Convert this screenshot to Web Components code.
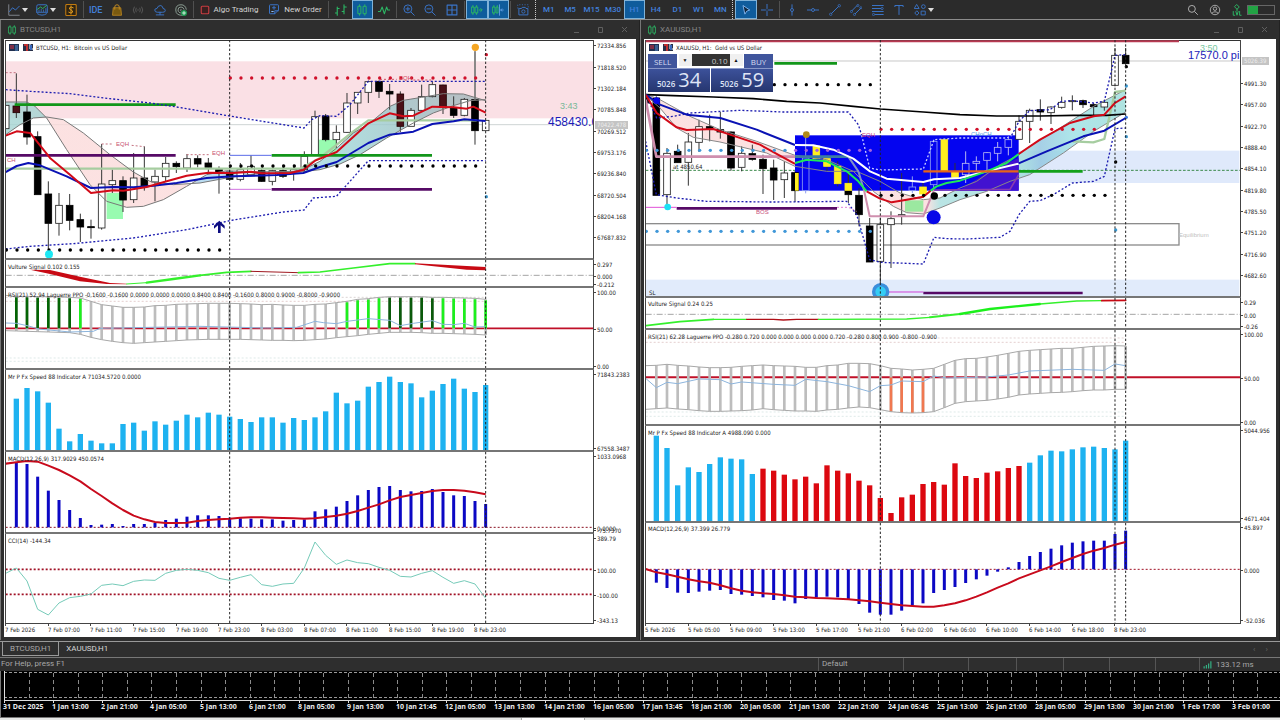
<!DOCTYPE html>
<html lang="en">
<head>
<meta charset="utf-8">
<title>Trading terminal</title>
<style>
html,body{margin:0;background:#2e2e2e}
body{font-family:Roboto,"Open Sans",sans-serif;color:#c8c8c8;font-size:8px}
</style>
</head>
<body>
<trade-terminal></trade-terminal>
<script>
/* ---------- shared base ---------- */
class Base extends HTMLElement {
  draw(html) {
    if (!this.shadowRoot) this.attachShadow({ mode: 'open' });
    const t = document.createElement('template');
    t.innerHTML = html;
    this.shadowRoot.replaceChildren(t.content.cloneNode(true));
  }
}

/* ---------- icons, 16 x 16 grid ---------- */
const B = '#3a74c8', G = '#2cb564';
const sv = (c, d, w = 1.3) => `<path d="${d}" fill="none" stroke="${c}" stroke-width="${w}" stroke-linecap="round" stroke-linejoin="round"/>`;
const ICONS = {
  chart: sv('#80858c', 'M1 1V15H15') + sv(B, 'M2 10L6 5L10 8L15 3'),
  indicator: sv(B, 'M1 8V3Q1 1 3 1H13Q15 1 15 3V8M1 11H15M2 13Q8 17 14 13M1 11V8M15 11V8') + sv(G, 'M2 7L6 4L9 6L14 2') + sv(B, 'M4 10V8M7 10V7M10 10V8M13 10V6', 1),
  dollar: '<rect x="1" y="0.500" width="14" height="15" rx="1.500" fill="#2f2412" stroke="#c07a10" stroke-width="1.400"/>' + sv('#e09a20', 'M11 5Q8 3 6 5Q5 7 8 8Q11 9 10 11Q8 13 5 11M8 2.500V13.500'),
  bag: '<path d="M3 5H13L14 15H2Z" fill="#7a5a10" stroke="#b88420" stroke-width="1.200"/>' + sv('#c08a24', 'M5 7V4Q5 1 8 1Q11 1 11 4V7'),
  signal: sv('#606060', 'M3 4Q0 8 3 12M5.500 5.500Q4 8 5.500 10.500M13 4Q16 8 13 12M10.500 5.500Q12 8 10.500 10.500M8 7.500V8.500', 1.1),
  cloud: sv(B, 'M4 11Q1 11 1 8Q1 6 4 6Q5 2 9 2Q12 3 12 6Q15 6 15 9Q15 11 12 11ZM8 11V14M3 14.500H13'),
  vps: sv('#9ab0a4', 'M11 15Q1 16 1 8Q1 1 8 1Q14 1 15 7M9 12Q4 12 4 8Q4 4 8 4Q11 4 12 7M8 9.500Q6.500 8 8 7', 1.1) + '<circle cx="12" cy="12" r="4" fill="#1d9a50"/>' + sv('#fff', 'M12 10V14M10 12H14', 1),
  stop: '<rect x="2" y="2" width="12" height="12" rx="1.500" fill="#3a2020" stroke="#c83c40" stroke-width="1.800"/>',
  order: sv(B, 'M9 13H3Q2 13 2 12V2Q2 1 3 1H13Q14 1 14 2V8L9 13V9H14M6 5H10M8 3V7') + sv('#8fc0ff', 'M5 10H7'),
  bars: sv(G, 'M3 4V15M3 12H0.500M3 6H5.500M12 1V13M12 10H9.500M12 4H15', 1.5),
  candles: sv(G, 'M3 3H6.500V13H3ZM4.750 1V3M4.750 13V15M10 3H13.500V13H10ZM11.750 1V3M11.750 13V15', 1.3),
  line: sv(G, 'M0.500 10L3 10L5.500 4L8.500 13L11.500 4L13 8H15.500', 1.4),
  zoomin: sv(B, 'M11 11L15 15M4 6.500H9M6.500 4V9') + `<circle cx="6.500" cy="6.500" r="5.300" fill="none" stroke="${B}" stroke-width="1.300"/>`,
  zoomout: sv(B, 'M11 11L15 15M4 6.500H9') + `<circle cx="6.500" cy="6.500" r="5.300" fill="none" stroke="${B}" stroke-width="1.300"/>`,
  tile: sv(B, 'M1.500 1.500H14.500V14.500H1.500ZM8 1.500V14.500M1.500 8H14.500', 1.5),
  scroll: sv(G, 'M1 4H4V12H1ZM2.500 2V4M2.500 12V14M6 4H9V12H6ZM7.500 2V4M7.500 12V14', 1.3) + sv(G, 'M11 8H14M13 6L15 8L13 10'),
  shift: sv(G, 'M1 4H4V12H1ZM2.500 2V4M2.500 12V14M6 4H8V12H6ZM7 2V4', 1.3) + sv('#6fa8ee', 'M10 1V15M15 8H12M13 6.500L11.500 8L13 9.500', 1.1),
  camera: `<path d="M1 6V1H15V6" fill="none" stroke="${B}" stroke-dasharray="1.500 2"/>` + sv(B, 'M4 6H6L7 4.500H11L12 6H14.500V14.500H2.500V6Z') + `<circle cx="8.500" cy="10" r="2.200" fill="none" stroke="${B}" stroke-width="1.200"/>`,
  cursor: '<path d="M4 2L13 8L9 9.500L6.500 13.500Z" fill="#10263c" stroke="#8ec2ff" stroke-width="1.100"/>',
  cross: sv(B, 'M8 0.500V6M8 10V15.500M0.500 8H6M10 8H15.500') + `<circle cx="8" cy="8" r="0.800" fill="${B}"/>`,
  vline: sv(B, 'M8 1V6M8 10V15') + `<circle cx="8" cy="8" r="2" fill="none" stroke="${B}" stroke-width="1.200"/>`,
  hline: sv(B, 'M0.500 8H6M10 8H15.500') + `<circle cx="8" cy="8" r="2" fill="none" stroke="${B}" stroke-width="1.200"/>`,
  trend: sv(B, 'M3.500 12.500L12.500 3.500') + `<g fill="none" stroke="${B}"><circle cx="2.300" cy="13.700" r="1.600"/><circle cx="13.700" cy="2.300" r="1.600"/></g>`,
  channel: sv(B, 'M2.500 9L9 2.500M7 13L14 6') + `<g fill="none" stroke="${B}"><circle cx="1.900" cy="10" r="1.400"/><circle cx="10.500" cy="2" r="1.400"/><circle cx="6" cy="14" r="1.400"/><circle cx="14.500" cy="5" r="1.400"/></g>`,
  fib: sv(B, 'M0.500 2H15M0.500 6H12M0.500 10H15M4 14H15') + `<g fill="#2e2e2e" stroke="${B}"><circle cx="13.500" cy="6" r="1.500"/><circle cx="2" cy="14" r="1.500"/></g>`,
  text: sv(B, 'M2.500 3.500V2H13.500V3.500M8 2V14'),
  shapes: sv(B, 'M3.800 1L6.800 6H0.800Z M10 9.500H15V14.500H10Z', 1.2) + `<g fill="none" stroke="${B}" stroke-width="1.200"><circle cx="12.500" cy="3.500" r="2.500"/><path d="M3.800 9L6.600 12L3.800 15L1 12Z"/></g>`,
  search: sv('#b0b0b0', 'M10.500 10.500L14 14') + '<circle cx="6.500" cy="6.500" r="4.600" fill="none" stroke="#b0b0b0" stroke-width="1.300"/>',
  user: '<circle cx="8" cy="8" r="6.300" fill="none" stroke="#b0b0b0" stroke-width="1.200"/><circle cx="8" cy="6.300" r="2.300" fill="none" stroke="#b0b0b0" stroke-width="1.200"/>' + sv('#b0b0b0', 'M3.800 12.300Q8 8 12.200 12.300', 1.2),
  level: sv(G, 'M8 1L11 4L8 7L5 4ZM8 7V9M3 10V15H5M6.500 10L8 15L9.500 10M11.500 10V15H13.500', 1.3),
  strength: '<path d="M1 15V11H3V15ZM5 15V9H7V15ZM9 15V6H11V15ZM13 15V2H15V15Z" fill="#35b98a"/>'
};
class ToolIcon extends Base {
  connectedCallback() {
    this.draw(`<style>:host{display:block;width:12px;height:12px}svg{display:block;width:100%;height:100%}</style>
      <svg viewBox="0 0 16 16" aria-hidden="true">${ICONS[this.getAttribute('name')]}</svg>`);
  }
}

/* ---------- toolbar ---------- */
class TradeToolbar extends Base {
  connectedCallback() {
    const b = (n, l, on) => `<button aria-label="${l}"${on ? ' class="on"' : ''}><tool-icon name="${n}"></tool-icon></button>`;
    const dd = (n, l) => `<button class="dd" aria-label="${l}"><tool-icon name="${n}"></tool-icon><i></i></button>`;
    const tf = ['M1', 'M5', 'M15', 'M30', 'H1', 'H4', 'D1', 'W1', 'MN'].map(t => `<button class="tf${t === 'H1' ? ' on' : ''}">${t}</button>`).join('');
    this.draw(`<style>
      :host{display:flex;height:19px;align-items:stretch;background:#2b2b2b;border-bottom:1px solid #8c8c8c;padding-left:4px;overflow:hidden}
      button{box-sizing:border-box;min-width:0;padding:0;border:0;background:none;color:#d4d4d4;font:8px Roboto,"Open Sans",sans-serif;display:flex;align-items:center;justify-content:center;white-space:nowrap}
      .g{display:grid;grid-auto-flow:column;grid-auto-columns:1fr;flex:none}
      .on{background:#0f5c9c;border:1px solid #7fb2d8}
      .dd{width:28px;gap:2px;flex:none}
      .dd i{border:3px solid transparent;border-top:4px solid #ddd;border-bottom:0}
      .tx{gap:4px}
      .tf{color:#4280dc;font-weight:500}
      .ide{font-size:9px}
      hr{width:1px;margin:1px;border:0;background:#505050;flex:none}
      hr.dot{width:0;margin:0 2px 0 1px;background:none;border-left:1px dotted #ccc}
      .end{margin-left:auto;display:flex;align-items:center;gap:10px;padding-right:5px;flex:none}
      .bat{width:28px;height:10px;margin-left:-6px;box-sizing:border-box;border:1px solid #666;background:linear-gradient(90deg,#22a344 10px,#2b2b2b 10px)}
      .w22{width:22px;flex:none}.w43{width:43px}.w65{width:65px}.w107{width:107px}.w129{width:129px}.w193{width:193px}.w68{width:68px}.w64{width:64px}
    </style>
    ${dd('chart', 'Chart type')}${dd('indicator', 'Indicators')}<button class="w22" aria-label="Symbols"><tool-icon name="dollar"></tool-icon></button><hr>
    <div class="g w107"><button class="tf ide">IDE</button>${b('bag', 'Market')}${b('signal', 'Signals')}${b('cloud', 'Cloud')}${b('vps', 'VPS')}</div><hr>
    <button class="tx w68"><tool-icon name="stop" style="width:10px;height:10px"></tool-icon>Algo Trading</button>
    <button class="tx w64"><tool-icon name="order"></tool-icon>New Order</button><hr>
    <div class="g w65">${b('bars', 'Bars')}${b('candles', 'Candles', 1)}${b('line', 'Line')}</div><hr>
    <div class="g w65">${b('zoomin', 'Zoom in')}${b('zoomout', 'Zoom out')}${b('tile', 'Tile')}</div><hr>
    <div class="g w43">${b('scroll', 'Auto scroll', 1)}${b('shift', 'Chart shift', 1)}</div><hr>
    <button class="w22" aria-label="Screenshot"><tool-icon name="camera"></tool-icon></button><hr class="dot">
    <div class="g w193">${tf}</div><hr class="dot">
    <div class="g w43">${b('cursor', 'Cursor', 1)}${b('cross', 'Crosshair')}</div><hr>
    <div class="g w129">${b('vline', 'Vertical line')}${b('hline', 'Horizontal line')}${b('trend', 'Trend line')}${b('channel', 'Channel')}${b('fib', 'Fibonacci')}${b('text', 'Text')}</div>
    ${dd('shapes', 'Objects')}
    <div class="end">${b('search', 'Search')}${b('user', 'Account')}${b('level', 'Level')}<div class="bat"></div></div>`);
  }
}

/* ---------- drawing helpers: plot units are a third of a pixel ---------- */
const X = i => 17 + 32 * i;
const rect = (x1, y1, x2, y2, f, e = '') => `<rect x="${x1}" y="${y1}" width="${x2 - x1}" height="${y2 - y1}" fill="${f}" ${e}/>`;
const pl = (p, c, w = 3, e = '') => `<polyline points="${p}" fill="none" stroke="${c}" stroke-width="${w}" stroke-linejoin="round" ${e}/>`;
const hl = (y, x1, x2, c, w = 3, e = '') => pl(`${x1},${y} ${x2},${y}`, c, w, e);
const series = (a, s = 0) => a.map((y, k) => `${X(k + s)},${y}`).join(' ');
const dots = (y, x1, x2, c) => { let s = ''; for (let x = x1; x <= x2; x += 32) s += `<circle cx="${x}" cy="${y}" r="5" fill="${c}"/>`; return s; };
const ball = (x, y, r, c, e = '') => `<circle cx="${x}" cy="${y}" r="${r}" fill="${c}" ${e}/>`;
const DOT = 'stroke-dasharray="6 6"';
const guide = xs => xs.map(x => `<line x1="${x}" x2="${x}" y1="0" y2="900" stroke="#222" stroke-width="3" stroke-dasharray="7 6"/>`).join('');
const FILL = { b: ['#000', '#000'], w: ['#fff', '#222'], d: ['#4a1018', '#200'], y: ['#ffee20', '#ffee20'], o: ['none', '#8f9ff0'], l: ['none', '#b8b8f0'] };
const candles = list => list.map(([i, h, l, t, b, c]) => {
  const x = X(i), f = FILL[c];
  return `<path d="M${x} ${h}V${t}M${x} ${b}V${l}" stroke="${c === 'l' || c === 'o' ? f[1] : '#333'}" stroke-width="3"/><rect x="${x - 10}" y="${t}" width="20" height="${Math.max(b - t, 3)}" fill="${f[0]}" stroke="${f[1]}" stroke-width="2.500"/>`;
}).join('');
const cols = (a, base, c, w, s = 1) => a.map((y, k) => rect(X(k + s) - w / 2, Math.min(y, base), X(k + s) + w / 2, Math.max(y, base), c)).join('');
const band = (up, lo, mark, mid) => {
  let s = '';
  up.forEach((y, i) => {
    if (!i) return;
    s += rect(X(i) - 4, y, X(i) + 4, lo[i], '#bdbdbd');
    const m = mark(i);
    if (m) s += m[1] ? rect(X(i) - 4, mid, X(i) + 4, lo[i], m[0]) : rect(X(i) - 4, y + 3, X(i) + 4, mid, m[0]);
  });
  return s + pl(series(up), '#a8a8a8') + pl(series(lo), '#a8a8a8');
};
const tx = (x, y, t, c = '#222', s = 6, e = '') => `<text x="${x}" y="${y}" fill="${c}" font-size="${s}" ${e}>${t}</text>`;
const ARIAL = 'font-family="Liberation Sans, sans-serif"';
const flags = `<g><rect x="3" y="4" width="10" height="7" fill="#203050"/><path d="M4 6H8M4 8H8" stroke="#e03040"/><path d="M9 6H12M9 8H12M9 10H12" stroke="#5a90d0"/>
  <rect x="17" y="4" width="10" height="7" fill="#283048"/><path d="M18 5H21V11" stroke="#c03030" stroke-width="2" fill="none"/><path d="M24 4V9H27" stroke="#fff" fill="none"/><path d="M25 5V10" stroke="#3a6ac0" stroke-width="2"/></g>`;

/* ---------- left chart ---------- */
const L = { guides: [689, 1457], labels: ['7 Feb 2026', '7 Feb 07:00', '7 Feb 11:00', '7 Feb 15:00', '7 Feb 19:00', '7 Feb 23:00', '8 Feb 03:00', '8 Feb 07:00', '8 Feb 11:00', '8 Feb 15:00', '8 Feb 19:00', '8 Feb 23:00'] };
const LA = [[17,192],[80,192],[105,205],[140,240],[200,335],[270,440],[320,490],[380,508],[430,505],[490,485],[560,445],[620,410],[680,398],[760,402],[880,400],[920,390],[960,370],[1010,330],[1060,285],[1110,255],[1170,205],[1210,187],[1265,178],[1330,167],[1390,168],[1457,188]];
const LB = [[17,290],[60,260],[100,240],[140,237],[190,245],[250,285],[330,350],[400,402],[450,430],[520,440],[600,435],[680,420],[760,408],[900,402],[960,395],[1020,378],[1080,350],[1160,300],[1240,255],[1300,225],[1360,203],[1410,188],[1457,185]];
const cloud = (a, b, id, stops) => `<linearGradient id="${id}" gradientUnits="userSpaceOnUse" x1="0" x2="1500" y1="0" y2="0">${stops.map(([x, c]) => `<stop offset="${x / 1500}" stop-color="${c}"/>`).join('')}</linearGradient>
  <polygon points="${[...a, ...[...b].reverse()].join(' ')}" fill="url(#${id})" fill-opacity=".8"/>`;
const leftMain =
  rect(17, 70, 1790, 241, '#fae0e5') + hl(260, 17, 1790, '#cfd4d4') +
  cloud(LA, LB, 'lc', [[0,'#a4d4d2'],[140,'#a4d4d2'],[141,'#fbdada'],[560,'#fbdada'],[600,'#a8d4ee'],[900,'#a8d4ee'],[1000,'#9ed8d8'],[1200,'#9cc4c8'],[1457,'#a8b4b8']]) +
  rect(320, 465, 369, 543, '#98fbb0') + rect(945, 305, 1009, 350, '#98fbb0') +
  candles([[0,202,272,202,272,'w'],[1,106,240,204,224,'d'],[2,170,320,222,297,'b'],[3,280,470,296,470,'b'],[4,430,635,468,556,'b'],[5,465,593,502,556,'w'],[6,468,577,502,547,'b'],[7,527,612,545,567,'b'],[8,545,602,566,569,'b'],[9,318,575,438,570,'w'],[10,395,465,428,440,'w'],[11,415,522,428,486,'b'],[12,345,495,420,485,'w'],[13,325,458,420,445,'b'],[14,395,490,415,432,'w'],[15,357,430,376,416,'w'],[16,370,405,376,386,'b'],[17,348,402,362,390,'w'],[18,352,388,362,378,'b'],[19,360,404,375,388,'b'],[20,385,467,392,402,'b'],[21,380,425,402,424,'b'],[22,375,430,395,424,'w'],[23,352,415,385,410,'w'],[24,390,432,398,430,'b'],[25,395,442,398,430,'w'],[26,380,420,398,415,'b'],[27,380,428,395,402,'w'],[28,340,400,355,395,'w'],[29,218,352,236,350,'w'],[30,228,310,234,305,'b'],[31,262,330,283,305,'w'],[32,165,285,195,283,'w'],[33,162,228,163,195,'w'],[34,128,195,131,163,'w'],[35,128,180,130,160,'b'],[36,138,215,160,168,'b'],[37,160,282,168,265,'d'],[38,210,265,217,265,'w'],[39,140,220,176,217,'w'],[40,130,178,140,176,'w'],[41,140,228,141,208,'d'],[42,175,240,210,232,'b'],[43,180,235,184,232,'w'],[44,40,320,185,278,'b'],[45,247,278,247,278,'w']]) +
  pl('1425,40 1425,185', '#888', 5) +
  pl('17,392 900,392 960,360 1060,280 1105,247 1430,247', '#a6cda0', 7) +
  pl(LA, '#777') + pl(LB, '#777') +
  hl(200, 44, 527, '#12961a', 8) + hl(352, 17, 527, '#560a66', 8) + hl(352, 815, 1296, '#12961a', 8) + hl(454, 815, 1296, '#560a66', 8) + hl(352, 689, 815, '#5a6ae8') + hl(454, 689, 815, '#d070e0') +
  pl('17,402 50,384 85,375 120,382 200,415 273,450 340,447 400,448 460,443 530,435 620,420 700,415 830,411 910,405 960,387 1010,372 1105,315 1169,290 1240,281 1297,258 1361,250 1393,244 1457,249', '#0a12b4', 6) +
  pl('17,293 50,280 90,285 150,360 210,410 273,465 340,457 370,458 440,447 500,430 560,413 625,404 700,405 753,401 785,406 870,405 910,396 945,368 1010,342 1105,256 1169,226 1210,235 1240,233 1297,206 1361,208 1400,212 1420,206 1457,224', '#d20a18', 6) +
  pl('17,155 90,160 210,167 330,182 450,195 530,207 689,234 800,252 912,270 935,245 960,233 1009,235 1050,200 1105,130 1457,130', '#1c1cb0', 4, DOT) +
  pl('17,633 90,625 220,617 400,600 560,575 700,546 850,522 912,516 940,480 1009,475 1050,430 1105,368 1457,368', '#1c1cb0', 4, DOT) +
  pl('17,104 49,104', '#c47080', 3, DOT) + pl('305,318 340,318', '#c47080', 3, DOT) + pl('395,322 433,326', '#c47080', 3, DOT) + pl('560,350 630,350', '#c47080', 3, DOT) + pl('1140,124 1190,124', '#d05060', 3, DOT) + pl('1240,126 1300,126', '#d05060', 3, DOT) +
  dots(120, 691, 1427, '#d0102a') + dots(636, 19, 660, '#000') + dots(384, 691, 1427, '#000') +
  ball(1459, 50, 5, '#d0102a') + ball(1459, 476, 5, '#3a98d0') + ball(147, 649, 12, '#1ce8f4') + ball(1426, 28, 11, '#f5a623') +
  '<path d="M658 548L674 563V572L662 562V585H654V562L642 572V563Z" fill="#0c0c80"/>';
const leftMainText = flags + tx(30, 10, 'BTCUSD, H1:&nbsp; Bitcoin vs US Dollar') +
  tx(110, 106, 'EQH', '#c8506e', 6, ARIAL) + tx(206, 115, 'EQH', '#c8506e', 6, ARIAL) + tx(393, 40, 'EQH', '#d04058', 6, ARIAL) + tx(1, 122, 'CH', '#c8506e', 6, ARIAL) +
  tx(554, 69, '3:43', '#78b898', 9, ARIAL) + tx(542, 86, '458430.0', '#1c1cb8', 12, ARIAL);
const seg = (p, c, w) => pl(p, c, w, 'stroke-linecap="round"');
L.panes = [
  { h: 220, oy: -2, first: 1, body: leftMain, text: leftMainText,
    axis: [22,86,150,214,279,343,406,470,535,598].map((y, k) => [y / 3 - 2, ['72334.856','71818.520','71302.184','70785.848','70269.512','69753.176','69236.840','68720.504','68204.168','67687.832'][k]]), tag: [85, '70422.478'] },
  { h: 28, oy: -2, body: `<line x1="17" x2="1790" y1="52" y2="52" stroke="#777" stroke-width="2" stroke-dasharray="18 6 3 6"/>` +
      '<path d="M90 35L150 36L240 56L330 75L380 77V79L320 78L240 70L150 48Z" fill="#c80a14"/>' + seg('380,78 440,74', '#34f02c', 3) + seg('440,74 520,63 600,52', '#34f02c', 7) + seg('600,52 680,43 753,40', '#34f02c', 5) + seg('753,40 895,44', '#a01820', 3) + seg('895,44 960,42 1060,30 1169,17 1245,17', '#34f02c', 5) + '<path d="M1245 16L1457 27V37L1400 35L1245 19Z" fill="#c80a14"/>',
    text: tx(2, 9, 'Vulture Signal 0.102 0.155'), axis: [[4, '0.297'], [15.500, '0.000'], [24, '-0.212']] },
  { h: 82, oy: -30, body: hl(118, 17, 1457, '#c8c0c0', 2, DOT) + hl(130, 17, 1457, '#d8b8b8', 2, DOT) + hl(300, 17, 1457, '#cfe0de', 2, DOT) + hl(310, 17, 1457, '#cfe0de', 2, DOT) + hl(211, 17, 1790, '#c01028', 5) +
      band([112,115,115,116,116,117,118,120,130,140,144,148,148,147,143,142,139,138,137,136,136,136,137,138,140,139,141,142,142,139,138,134,130,124,122,118,116,116,116,116,118,118,119,120,121,124],
        [218,219,220,221,222,223,224,229,238,245,250,254,256,254,252,250,248,246,245,244,244,244,244,245,246,247,247,248,247,245,243,239,236,233,229,226,223,223,223,224,226,226,227,228,229,231],
        i => i < 7 ? ['#046404'] : i === 7 || (i > 31 && i < 36) || i > 40 ? ['#1cf01c'] : i > 35 ? ['#0a5a0a'] : 0, 211) +
      pl('17,195 50,196 90,205 115,213 210,222 280,220 300,211 600,205 800,210 890,208 945,190 970,194 1009,197 1041,190 1105,182 1169,187 1201,203 1240,196 1297,188 1329,199 1361,200 1393,196 1425,207 1457,206', '#8cb4dc', 3),
    text: tx(2, 9, 'RSI(21) 52.94 Laguerre PPO -0.1600 -0.1600 0.0000 0.0000 0.0000 0.8400 0.8400 -0.1600 0.8000 0.9000 -0.8000 -0.9000'), axis: [[4, '100.00'], [40.500, '50.00'], [78, '0.00']] },
  { h: 82, oy: -112, body: cols([422,390,400,434,512,550,528,548,556,556,498,494,518,490,500,488,470,478,464,470,476,483,492,478,478,494,480,486,478,460,404,436,428,386,372,356,372,376,418,398,378,362,392,402,381], 579, '#1eb2f0', 16),
    text: tx(2, 9, 'Mr P Fx Speed 88 Indicator A 71034.5720 0.0000'), axis: [[4, '71843.2383'], [78, '67558.3487']] },
  { h: 82, oy: -2, body: hl(232, 17, 1790, '#8a1020', 3, DOT) + cols([37,42,80,122,150,180,204,225,224,222,228,222,222,219,210,206,200,196,196,198,203,205,206,208,208,212,210,208,184,178,170,153,136,120,111,108,120,124,123,117,126,136,138,153,162], 232, '#0c08c4', 9) +
      pl(series([41,37,33,35,47,60,76,94,117,138,160,180,197,208,216,219,219,218,213,210,208,206,203,202,202,203,204,205,206,205,201,197,191,183,173,163,151,141,135,129,123,120,120,122,127,133]), '#c80a1c', 6),
    text: tx(2, 9, 'MACD(12,26,9) 317.9029 450.0574'), axis: [[4, '1033.0968'], [75.500, '0.0000'], [78, '-75.7370']] },
  { h: 90, oy: -84, last: 1, body: hl(358, 17, 1790, '#a01024', 5, DOT) + hl(433, 17, 1790, '#a01024', 5, DOT) +
      pl(series([370,354,393,478,495,459,443,439,432,406,402,407,394,390,391,370,361,358,361,368,385,391,382,374,404,409,402,400,354,276,316,343,330,338,341,352,361,379,381,370,362,382,400,392,402,445]), '#74cab8', 3),
    text: tx(2, 9, 'CCI(14) -144.34'), axis: [[4, '389.79'], [35.500, '100.00'], [60.500, '-100.00'], [86, '-343.13']] }
];

/* ---------- right chart ---------- */
const R = { guides: [721, 1425, 1457], labels: ['5 Feb 2026', '5 Feb 05:00', '5 Feb 09:00', '5 Feb 13:00', '5 Feb 17:00', '5 Feb 21:00', '6 Feb 02:00', '6 Feb 06:00', '6 Feb 10:00', '6 Feb 14:00', '6 Feb 18:00', '8 Feb 23:00'] };
const RA = [[17,172],[60,210],[110,270],[160,298],[240,312],[380,345],[465,385],[560,400],[650,400],[720,430],[780,465],[850,485],[900,480],[960,450],[1010,430],[1080,380],[1137,350],[1169,325],[1260,270],[1361,205],[1457,155]];
const RB = [[17,168],[60,185],[150,235],[240,275],[350,310],[465,352],[560,365],[640,400],[700,460],[760,505],[800,524],[850,528],[900,510],[960,485],[1040,460],[1110,430],[1169,410],[1270,345],[1361,280],[1457,222]];
const rightMain =
  rect(1136, 338, 1798, 435, '#dfe9fb') + rect(17, 725, 1798, 775, '#e1ebfb') + hl(10, 17, 1617, '#b83a52', 6) + hl(69, 17, 1803, '#c8c8c8') +
  '<rect x="9" y="557" width="1608" height="64" fill="none" stroke="#8c8c8c" stroke-width="4"/>' +
  cloud(RA, RB, 'rc', [[0,'#fbdada'],[860,'#fbdada'],[900,'#a8dede'],[1150,'#a0dcdc'],[1200,'#90c4e0'],[1300,'#9ae0e4'],[1457,'#9adcd8']]) +
  rect(795, 487, 850, 521, '#9be8a0') +
  hl(397, 17, 1800, '#3a8a4a', 3, 'stroke-dasharray="8 5"') +
  rect(465, 292, 1136, 458, '#0404f0') + '<path d="M960 455L1040 405L1136 360V458H960Z" fill="#4212d0"/>' +
  candles([[0,170,195,170,195,'b'],[1,175,472,180,472,'b'],[2,330,500,346,470,'w'],[3,320,375,340,374,'b'],[4,285,443,312,373,'w'],[5,245,342,266,313,'w'],[6,230,310,266,272,'b'],[7,222,302,275,282,'b'],[8,280,398,282,390,'b'],[9,325,400,346,388,'w'],[10,320,368,347,364,'b'],[11,350,468,364,392,'b'],[12,365,486,390,426,'b'],[13,370,480,405,425,'w'],[14,400,492,404,458,'b'],[15,292,466,360,458,'o'],[16,320,370,324,362,'y'],[17,350,400,362,385,'y'],[18,370,445,385,437,'y'],[19,405,495,458,470,'b'],[19,405,436,436,457,'y'],[20,450,565,472,530,'b'],[21,540,672,564,672,'b'],[22,540,760,560,670,'w'],[23,520,690,542,560,'w'],[24,405,560,530,534,'w'],[25,415,465,447,458,'o'],[26,435,480,447,468,'y'],[27,305,450,310,440,'o'],[28,300,400,305,398,'y'],[29,375,420,402,418,'y'],[30,340,435,376,410,'l'],[31,355,400,370,376,'l'],[32,342,398,344,367,'l'],[33,312,370,328,346,'l'],[34,298,352,305,328,'l'],[35,232,305,250,304,'w'],[36,212,315,217,250,'w'],[37,184,248,215,222,'b'],[38,205,258,207,224,'w'],[39,176,212,193,208,'w'],[40,172,217,188,191,'w'],[41,185,210,188,200,'b'],[42,195,235,200,206,'b'],[43,185,218,193,207,'w'],[44,30,145,52,142,'w'],[45,30,86,52,77,'b']]) +
  rect(465, 405, 476, 458, '#ffee20') +
  pl(RA, '#888') + pl(RB, '#888') +
  pl('17,185 49,356 465,356', '#cf8fae', 8) + pl('465,356 625,356', '#3c7ca4', 8) + pl('625,356 655,400 672,456', '#8090c8', 6) + pl('672,456 689,535 850,535 882,456', '#cf8fae', 6) + pl('882,456 1110,454 1136,410', '#8a3ab0', 5) +
  pl('1297,310 1360,313 1393,303 1425,162 1457,158', '#a6cda0', 7) +
  pl('17,170 100,173 220,177 340,182 440,190 540,195 640,205 721,213 850,222 960,230 1070,234 1200,234 1300,232 1400,232 1457,228', '#000', 5) +
  pl('17,170 50,240 100,235 150,225 300,217 430,222 625,222 655,260 665,292', '#1c1cb0', 4, DOT) + pl('665,292 689,390 720,396 850,393 882,305 960,300 1100,300 1115,292', '#c8ccff', 4, DOT) + pl('1115,292 1137,250 1169,218 1230,215 1265,190 1297,188 1361,195 1393,190 1425,52 1457,50', '#1c1cb0', 4, DOT) +
  pl('17,310 49,470 110,480 200,490 400,492 620,490 650,530 689,665 721,673 850,678 882,598 920,602 980,603 1080,598 1110,580 1137,530 1169,490 1200,488 1240,470 1297,435 1361,430 1393,415 1425,272 1457,270', '#1c1cb0', 4, DOT) +
  pl('17,170 60,200 140,230 241,240 350,275 465,321', '#0a12b4', 6) + pl('465,321 520,322 580,335 640,362 690,400 740,422 850,432 882,424 960,420 1040,400 1136,377', '#fff', 6) + pl('1136,376 1220,340 1330,295 1393,278 1457,240', '#0a12b4', 6) +
  pl('17,170 50,225 110,268 140,276 220,273 270,290 360,320 465,378', '#d20a18', 6) + pl('465,375 500,365 560,370 620,400 655,430 680,460', '#1ee85a', 6) + pl('680,460 720,482 755,493 800,485 850,476 872,458', '#d20a18', 6) + pl('872,458 890,445 920,435 960,428 1040,400 1100,375 1136,348', '#1ee85a', 6) + pl('1136,348 1200,305 1290,255 1361,235 1393,230 1425,195 1457,175', '#d20a18', 6) +
  hl(76, 403, 591, '#12961a', 8) + hl(511, 110, 591, '#560a66', 8) + hl(508, 17, 110, '#e050d8') + pl('591,508 625,508 650,520', '#e080d8', 3, DOT) + hl(765, 850, 1328, '#560a66', 8) + hl(762, 740, 850, '#d040d8') + hl(400, 850, 1136, '#e86418', 7) + hl(400, 1136, 1328, '#12a01a', 8) +
  dots(140, 403, 691, '#000') + dots(274, 723, 1365, '#d0102a') + dots(472, 723, 1396, '#000') + dots(337, 19, 464, '#3f97d8') + dots(337, 467, 691, '#a060e0') + dots(580, 19, 691, '#3f97d8') +
  ball(1427, 372, 5, '#000') + ball(1459, 86, 5, '#000') + ball(1459, 144, 5, '#3a98d0') + ball(1459, 238, 5, '#3a78e0') + ball(1459, 296, 5, '#3a98d0') + ball(1427, 576, 5, '#3a98d0') +
  ball(83, 507, 10, '#1ce0f4') + ball(50, 188, 10, '#0808e8') + ball(499, 290, 10, '#b08a18') + ball(881, 538, 21, '#0808e8') + ball(883, 474, 11, '#000') + ball(722, 761, 21, '#35cdf4', 'stroke="#3a8edc" stroke-width="10"');
const rightMainText = flags + tx(30, 10, 'XAUUSD, H1:&nbsp; Gold vs US Dollar') + tx(216, 97, 'EQH', '#c8407a', 6, ARIAL) + tx(325, 96, 'CHoCH', '#4a9ae0', 6, ARIAL) + tx(110, 174, 'BOS', '#c8507a', 6, ARIAL) +
  tx(27, 129, 'at 4850.64', '#222', 6) + tx(3, 255, 'SL') + tx(533, 197, 'Equilibrium', '#c0c0c0', 6, ARIAL) + tx(554, 11, '3:50', '#78c8a0', 9, ARIAL) + tx(542, 19, '17570.0 pi', '#1c1cb8', 11, ARIAL);
R.panes = [
  { h: 258, oy: -2, first: 1, body: rightMain, text: rightMainText, panel: 1,
    axis: ['4991.30','4957.00','4922.70','4888.40','4854.10','4819.80','4785.50','4751.20','4716.90','4682.60'].map((t, k) => [43 + k * 21.333, t]), tag: [21, '5026.39'] },
  { h: 32, oy: -3, body: `<line x1="17" x2="1803" y1="58" y2="58" stroke="#777" stroke-width="2" stroke-dasharray="18 6 3 6"/>` + seg('17,92 120,80 220,73', '#34f02c', 5) + seg('220,73 320,73', '#34f02c', 4) + seg('320,73 400,73 430,75 470,73 535,73', '#b01018', 4) + seg('535,73 800,72 870,67', '#34f02c', 4) + seg('870,67 960,57', '#34f02c', 6) + seg('960,57 1050,42 1200,27', '#1cf01c', 7) + seg('1200,27 1310,18 1385,17', '#34f02c', 4) + seg('1385,17 1457,16', '#c80a14', 5),
    text: tx(2, 8, 'Vulture Signal 0.24 0.25'), axis: [[4, '0.29'], [16.500, '0.00'], [27.500, '-0.26']] },
  { h: 96, oy: -35, body: hl(129, 17, 1457, '#d8c0c0', 2, DOT) + hl(142, 17, 1457, '#d8b8b8', 2, DOT) + hl(351, 17, 1457, '#cfe0de', 2, DOT) + hl(364, 17, 1457, '#cfe0de', 2, DOT) + hl(247, 17, 1803, '#c01028', 6) +
      band([212,211,208,211,213,216,218,218,217,214,212,210,212,213,214,217,217,212,210,205,205,206,212,220,222,225,223,220,208,196,191,190,186,181,175,169,166,164,162,160,160,157,154,153,152,153],
        [343,341,339,342,344,347,349,349,348,347,345,341,344,346,348,348,349,345,343,339,336,338,344,350,353,354,353,350,338,325,320,318,316,312,307,300,297,295,293,292,290,287,285,285,283,283],
        i => i > 22 && i < 27 ? ['#f07850', 1] : 0, 247) +
      pl('17,250 49,278 81,262 113,266 177,252 241,254 273,267 305,261 401,268 465,271 497,253 561,260 625,272 689,290 721,272 753,270 785,258 849,260 881,243 920,249 1040,246 1105,240 1169,228 1297,223 1393,226 1425,207 1457,212', '#8cb4dc', 3),
    text: tx(2, 9, 'RSI(21) 62.28 Laguerre PPO -0.280 0.720 0.000 0.000 0.000 0.000 0.720 -0.280 0.800 0.900 -0.800 -0.900'), axis: [[4, '100.00'], [47.500, '50.00'], [92, '0.00']] },
  { h: 97, oy: -131, body: cols([422,459,571,517,531,507,487,491,493,537], 679, '#1eb2f0', 16) + cols([521,527,539,553,545,565,511,527,535,557,571,609,654,607,599,567,561,569,505,543,549,533,529,519,513], 679, '#dc0810', 16, 11) + cols([503,481,467,469,463,457,455,459,463,437], 679, '#1eb2f0', 16, 36),
    text: tx(2, 9, 'Mr P Fx Speed 88 Indicator A 4988.090 0.000'), axis: [[4, '5044.956'], [92, '4671.404']] },
  { h: 101, oy: -3, last: 1, body: hl(148, 17, 1803, '#a01024', 3, DOT) + cols([188,204,218,219,215,212,210,222,224,228,232,240,242,250,237,233,230,232,238,252,278,284,284,272,256,250,219,210,201,189,178,167,155,142,126,108,96,86,76,68,64,62,62,42,32], 148, '#0c08c4', 9) +
      pl(series([147,157,163,170,178,184,188,196,205,212,217,220,222,226,230,232,234,235,236,238,241,244,248,252,256,258,260,260,256,250,241,230,217,203,190,175,163,151,139,126,114,102,92,84,74,66]), '#c80a1c', 6),
    text: tx(2, 8, 'MACD(12,26,9) 37.399 26.779'), axis: [[4, '45.897'], [46.500, '0.000'], [97, '-52.036']] }
];
const CHARTS = { L, R };
const CHART_FONT = '"DejaVu Sans Condensed","DejaVu Sans","Open Sans",sans-serif';

/* ---------- one indicator pane: plot + price scale ---------- */
class ChartPane extends Base {
  set spec({ pane: p, guides }) {
    this.draw(`<style>
      :host{display:flex;color:#222}
      .plot{flex:1;min-width:0;box-sizing:border-box;border-left:1px solid #444;border-right:1px solid #444;border-bottom:${p.last ? '1px solid #444' : '2px solid #767676'};position:relative;${p.first ? 'box-shadow:inset 0 1px #333' : ''}}
      svg{display:block;width:100%;height:100%;overflow:hidden;font-family:${CHART_FONT};font-stretch:condensed}
      .scale{width:var(--scale);flex:none}
      .scale svg{overflow:visible}
      ::slotted(*){position:absolute;left:2px;top:14px}
    </style>
    <div class="plot"><svg><g transform="translate(-6 ${p.oy}) scale(.33333)">${p.body}</g><g transform="scale(.33333)"><g transform="translate(-18 0)">${guide(guides)}</g></g>${p.text}</svg><slot></slot></div>
    <div class="scale"><svg>${p.axis.map(([y, t]) => `<path d="M-1 ${Math.round(y)}.500H2" stroke="#444"/>` + tx(3, Math.round(y) + 3, t)).join('')}
      ${p.tag ? `<rect x="1" y="${p.tag[0] - 4}" width="${p.tag[1].length > 8 ? 33 : 27}" height="8" fill="#c4c4c4"/>` + tx(3, p.tag[0] + 2, p.tag[1], '#eee') : ''}</svg></div>`.replace('font-stretch:condensed', ''));
    this.style.height = p.h + 'px';
  }
}

/* ---------- one-click trading ---------- */
class OneClick extends Base {
  connectedCallback() {
    this.draw(`<style>
      :host{display:grid;grid-template-columns:1fr 1fr;column-gap:1px;width:125px;background:#fff;font-family:"Open Sans",sans-serif}
      .top{grid-column:1/3;display:flex;height:14px;justify-content:space-between}
      button{border:0;padding:0;color:#d6dcf2;background:#40559c;font:8px "Open Sans",sans-serif}
      .top>button{width:29px}
      .vol{display:flex;align-items:stretch;width:64px;height:12px}
      .vol button{width:13px;background:#f0f0f0;color:#111;font-size:5px}
      input{flex:1;min-width:0;border:0;padding:0 2px;background:#333;color:#c8c8c8;font:8px "Open Sans",sans-serif;text-align:right}
      .p{height:24px;background:linear-gradient(#3c519a,#26366f);border-top:1px solid #8a98c8;color:#dfe4f6;font-size:8px;display:flex;align-items:baseline;justify-content:center;gap:3px;line-height:22px}
      .p b{font-weight:400;font-size:20px}
      .p span{font-weight:600}
    </style>
    <div class="top"><button>SELL</button><div class="vol"><button aria-label="Less">▼</button><input value="0.10" aria-label="Volume"><button aria-label="More">▲</button></div><button>BUY</button></div>
    <button class="p"><span>5026</span><b>34</b></button><button class="p"><span>5026</span><b>59</b></button>`);
  }
}

/* ---------- chart window ---------- */
class ChartWindow extends Base {
  connectedCallback() {
    const d = CHARTS[this.getAttribute('chart')];
    this.draw(`<style>
      :host{display:block;box-sizing:border-box;background:#2e2e2e;border-left:1px solid #777;border-right:1px solid #222;padding:0 3px 3px;min-width:0}
      header{display:flex;align-items:center;height:19px;gap:3px;color:#858585;padding:0 1px 0 3px}
      header tool-icon{width:10px;height:10px}
      h2{font:8px Roboto,sans-serif;margin:0;flex:1}
      header button{border:0;padding:0;background:none;color:#606060;width:20px;height:10px;margin-right:1px}
      header svg{display:block;margin:auto}
      .body{background:#fff;padding:1px 0 0 1px}
      .time{height:13px;display:block;width:100%;font-family:${CHART_FONT}}
    </style>
    <header><tool-icon name="candles"></tool-icon><h2><slot></slot></h2>
      <button aria-label="Minimize"><svg width="7" height="7"><path d="M1 6.500H6" stroke="currentColor"/></svg></button>
      <button aria-label="Maximize"><svg width="7" height="7"><path d="M1.500 1.500H5.500V6.500H1.500Z" stroke="currentColor" fill="none"/></svg></button>
      <button aria-label="Close"><svg width="7" height="7"><path d="M1 1L6 6M6 1L1 6" stroke="currentColor"/></svg></button></header>
    <div class="body"><div class="panes"></div>
      <svg class="time">${d.labels.map((t, k) => { const x = Math.round(k * 42.667); return `<path d="M${x}.500 0V2" stroke="#444"/>` + tx(x, 8, t); }).join('')}</svg></div>`);
    const box = this.shadowRoot.querySelector('.panes');
    for (const p of d.panes) {
      const e = document.createElement('chart-pane');
      if (p.panel) e.append(document.createElement('one-click'));
      box.append(e);
      e.spec = { pane: p, guides: d.guides };
    }
  }
}

/* ---------- tabs, status, history ruler ---------- */
class TabStrip extends Base {
  connectedCallback() {
    this.draw(`<style>
      :host{display:flex;height:14px;margin-top:1px;border-top:1px solid #999;border-bottom:1px solid #777;padding:0 0 1px 2px;background:#2e2e2e}
      button{border:1px solid transparent;border-top:0;padding:0 6px;background:none;color:#d8d8d8;font:8px Roboto,sans-serif}
      .a{border-color:#999;color:#a8a8a8;padding:0 7px}
      i{margin-left:auto;color:#666;width:27px;font-style:normal;display:flex;gap:10px;align-items:center}
    </style><button class="a">BTCUSD,H1</button><button>XAUUSD,H1</button><i aria-hidden="true"><span>‹</span><span>›</span></i>`);
  }
}
class StatusBar extends Base {
  connectedCallback() {
    this.draw(`<style>
      :host{display:flex;height:13px;line-height:12px;background:#2e2e2e;color:#a8a8a8;font-size:8px}
      span{box-sizing:border-box;border-left:1px solid #555;padding-left:3px;flex:none}
      .h{flex:1;border:0;padding-left:1px}
      .n{display:flex;gap:4px;align-items:center}
      tool-icon{width:9px;height:9px}
    </style><span class="h">For Help, press F1</span><span style="width:85px">Default</span><span style="width:65px"></span><span style="width:48px"></span><span style="width:47px"></span><span style="width:46px"></span><span style="width:46px"></span><span style="width:44px"></span><span class="n" style="width:81px"><tool-icon name="strength"></tool-icon>133.12 ms</span>`);
  }
}
class HistoryRuler extends Base {
  connectedCallback() {
    const l = ['31 Dec 2025','1 Jan 13:00','2 Jan 21:00','4 Jan 05:00','5 Jan 13:00','6 Jan 21:00','8 Jan 05:00','9 Jan 13:00','10 Jan 21:45','12 Jan 05:00','13 Jan 13:00','14 Jan 21:00','16 Jan 05:00','17 Jan 13:45','18 Jan 21:00','20 Jan 05:00','21 Jan 13:00','22 Jan 21:00','24 Jan 05:45','25 Jan 13:00','26 Jan 21:00','28 Jan 05:00','29 Jan 13:00','30 Jan 21:00','1 Feb 17:00','3 Feb 01:00'];
    let g = '';
    for (let k = 0; k < 53; k++) g += `<path d="M${Math.round(3 + k * 24.57)}.500 2V27" stroke="#8a8a8a" stroke-dasharray="4 3"/>`;
    this.draw(`<style>
      :host{display:block;background:#000;height:46px;overflow:hidden;border-left:1px solid #777}
      svg{display:block;width:100%;height:100%;font-family:"Open Sans",sans-serif;font-weight:700}
    </style><svg>${g}<path d="M3 1.500H2000M3 26.500H2000" stroke="#999" stroke-dasharray="3 2"/><path d="M3 29.500H2000M3.500 0V30" stroke="#ddd"/>
      ${l.map((t, k) => { const x = Math.round(3 + k * 49.14); return `<path d="M${x}.500 29V32" stroke="#ddd"/>` + tx(x - 1, 38, t, '#eee', 7); }).join('')}</svg>`);
  }
}
class SheetEdge extends Base {
  connectedCallback() {
    this.draw(`<style>
      :host{display:flex;flex:1;min-height:4px;background:#e6e8e6;border-top:1px solid #777;box-sizing:border-box}
      i{flex:none;width:521px}b{width:64px;background:#fff;border:1px solid #aaa;border-width:0 1px;box-sizing:border-box}
    </style><i></i><b></b>`);
  }
}
class TradeTerminal extends Base {
  connectedCallback() {
    this.draw(`<style>
      :host{display:flex;flex-direction:column;min-height:100vh}
      main{display:grid;grid-template-columns:1fr 1fr}
      .l{--scale:42px}.r{--scale:35px}
    </style>
    <trade-toolbar></trade-toolbar>
    <main><chart-window class="l" chart="L">BTCUSD,H1</chart-window><chart-window class="r" chart="R">XAUUSD,H1</chart-window></main>
    <tab-strip></tab-strip><status-bar></status-bar><history-ruler></history-ruler><sheet-edge></sheet-edge>`);
  }
}
[['tool-icon', ToolIcon], ['trade-toolbar', TradeToolbar], ['chart-pane', ChartPane], ['one-click', OneClick], ['chart-window', ChartWindow], ['tab-strip', TabStrip], ['status-bar', StatusBar], ['history-ruler', HistoryRuler], ['sheet-edge', SheetEdge], ['trade-terminal', TradeTerminal]].forEach(([n, c]) => customElements.define(n, c));
</script>
</body>
</html>
